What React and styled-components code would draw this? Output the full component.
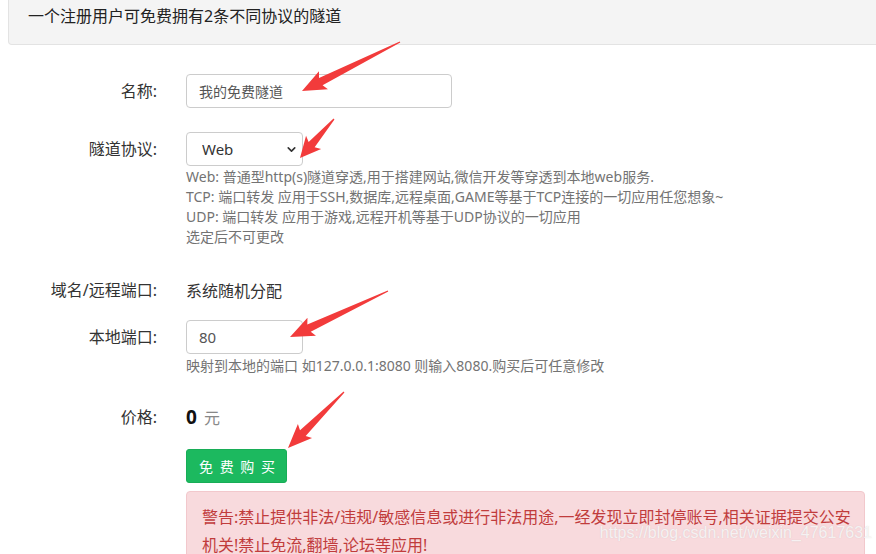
import styled, { createGlobalStyle } from 'styled-components';
import { ChevronDown } from 'lucide-react';

const GlobalStyle = createGlobalStyle`
  html, body {
    margin: 0;
    padding: 0;
    background: #fff;
    overflow: hidden;
  }
  body {
    font-family: "Noto Sans", "Noto Sans CJK SC", sans-serif;
    color: #333;
  }
`

const Page = styled.div`
  position: relative;
  width: 876px;
  height: 554px;
  overflow: hidden;
`

const Notice = styled.div`
  box-sizing: border-box;
  height: 45px;
  margin-left: 8px;
  margin-right: -20px;
  padding: 5px 19px 0;
  background: #f4f4f4;
  border: 1px solid #e3e3e3;
  border-top: none;
  border-radius: 0 0 4px 4px;
  font-size: 16px;
  line-height: 22px;
  color: #222;
`

const Form = styled.div`
  display: grid;
  grid-template-columns: 157px 1fr;
  column-gap: 29px;
  align-items: center;
`

const Label = styled.div`
  grid-column: 1;
  height: 34px;
  line-height: 34px;
  text-align: right;
  font-size: 16px;
  color: #333;
  margin-top: ${p => p.$top || 0}px;
`

const Field = styled.div`
  grid-column: 2;
  height: 34px;
  display: flex;
  align-items: center;
  margin-top: ${p => p.$top || 0}px;
`

const Extra = styled.div`
  grid-column: 2;
  margin-top: ${p => p.$top || 0}px;
`

const Input = styled.input`
  box-sizing: border-box;
  width: ${p => p.$width}px;
  height: 34px;
  padding: 0 12px;
  border: 1px solid #ccc;
  border-radius: 4px;
  font-family: "Noto Sans", "Noto Sans CJK SC", sans-serif;
  font-size: ${p => p.$size || 14}px;
  color: #555;
  outline: none;
  background: #fff;
`

const SelectWrap = styled.div`
  position: relative;
  width: 117px;
  height: 34px;
`

const Select = styled.select`
  box-sizing: border-box;
  width: 117px;
  height: 34px;
  padding: 0 0 0 15px;
  appearance: none;
  border: 1px solid #ccc;
  border-radius: 4px;
  font-family: "Noto Sans", "Noto Sans CJK SC", sans-serif;
  font-size: 15px;
  color: #333;
  background: #fff;
  outline: none;
`

const Chevron = styled(ChevronDown)`
  position: absolute;
  right: 5px;
  top: 11px;
  pointer-events: none;
  color: #333;
`

const Help = styled.div`
  font-size: 14px;
  line-height: 20px;
  color: #737373;
  white-space: nowrap;
`

const Static = styled.div`
  font-size: 16px;
  color: #333;
`

const Price = styled.span`
  font-size: 19px;
  font-weight: 700;
  color: #111;
  margin-right: 7px;
`

const Unit = styled.span`
  font-size: 16px;
  color: #888;
`

const BuyButton = styled.button`
  box-sizing: border-box;
  width: 101px;
  height: 34px;
  padding: 0 0 0 2px;
  border: 1px solid #18ad57;
  border-radius: 3px;
  background: #1cb95f;
  color: #fff;
  font-family: "Noto Sans", "Noto Sans CJK SC", sans-serif;
  font-size: 14px;
  letter-spacing: 1px;
  word-spacing: 1px;
  cursor: pointer;
`

const Alert = styled.div`
  box-sizing: border-box;
  width: 679px;
  height: 80px;
  padding: 11px 15px;
  background: #f8dadd;
  border: 1px solid #f2c8cc;
  border-radius: 4px;
  color: #c13c3c;
  font-size: 16px;
  line-height: 28px;
  white-space: nowrap;
`

const Watermark = styled.div`
  position: absolute;
  right: 4px;
  bottom: 12px;
  font-family: "Liberation Sans", Arial, sans-serif;
  font-size: 16px;
  color: rgba(255, 255, 255, 0.75);
  text-shadow: 0 0 1px rgba(180, 180, 180, 0.5);
  pointer-events: none;
`

const Arrows = styled.svg`
  position: absolute;
  left: 0;
  top: 0;
  pointer-events: none;
`

// tail -> tip, red annotation arrow
const Arrow = ({ x1, y1, x2, y2 }) => {
  const dx = x1 - x2;
  const dy = y1 - y2;
  const len = Math.sqrt(dx * dx + dy * dy);
  const ang = (Math.atan2(dy, dx) * 180) / Math.PI;
  const head = Math.min(24, len * 0.4);
  const pts = [
    [0, 0],
    [head, -10],
    [head - 3, -4],
    [len, -0.6],
    [len, 0.6],
    [head - 3, 4],
    [head, 10],
  ]
    .map(p => p.join(','))
    .join(' ');
  return (
    <polygon
      points={pts}
      fill="#f23b3b"
      transform={`translate(${x2} ${y2}) rotate(${ang})`}
    />
  );
};

export default function App() {
  return (
    <Page>
      <GlobalStyle />
      <Notice>一个注册用户可免费拥有2条不同协议的隧道</Notice>
      <Form>
        <Label $top={29}>名称:</Label>
        <Field $top={29}>
          <Input $width={266} defaultValue="我的免费隧道" />
        </Field>

        <Label $top={24}>隧道协议:</Label>
        <Field $top={24}>
          <SelectWrap>
            <Select defaultValue="web">
              <option value="web">Web</option>
              <option value="tcp">TCP</option>
              <option value="udp">UDP</option>
            </Select>
            <Chevron size={13} strokeWidth={3} />
          </SelectWrap>
        </Field>
        <Extra $top={1}>
          <Help>Web: 普通型http(s)隧道穿透,用于搭建网站,微信开发等穿透到本地web服务.</Help>
          <Help>TCP: 端口转发 应用于SSH,数据库,远程桌面,GAME等基于TCP连接的一切应用任您想象~</Help>
          <Help>UDP: 端口转发 应用于游戏,远程开机等基于UDP协议的一切应用</Help>
          <Help>选定后不可更改</Help>
        </Extra>

        <Label $top={26}>域名/远程端口:</Label>
        <Field $top={26}>
          <Static>系统随机分配</Static>
        </Field>

        <Label $top={13}>本地端口:</Label>
        <Field $top={13}>
          <Input $width={117} $size={15} defaultValue="80" />
        </Field>
        <Extra $top={2}>
          <Help>映射到本地的端口 如127.0.0.1:8080 则输入8080.购买后可任意修改</Help>
        </Extra>

        <Label $top={24}>价格:</Label>
        <Field $top={24}>
          <Price>0</Price>
          <Unit>元</Unit>
        </Field>

        <Extra $top={15}>
          <BuyButton>免 费 购 买</BuyButton>
        </Extra>

        <Extra $top={8}>
          <Alert>
            警告:禁止提供非法/违规/敏感信息或进行非法用途,一经发现立即封停账号,相关证据提交公安
            <br />
            机关!禁止免流,翻墙,论坛等应用!
          </Alert>
        </Extra>
      </Form>
      <Watermark>https://blog.csdn.net/weixin_47617631</Watermark>
      <Arrows width="876" height="554" viewBox="0 0 876 554">
        <Arrow x1={400} y1={42} x2={302} y2={91} />
        <Arrow x1={334} y1={119} x2={300} y2={158} />
        <Arrow x1={388} y1={291} x2={290} y2={337} />
        <Arrow x1={344} y1={392} x2={288} y2={448} />
      </Arrows>
    </Page>
  );
}
